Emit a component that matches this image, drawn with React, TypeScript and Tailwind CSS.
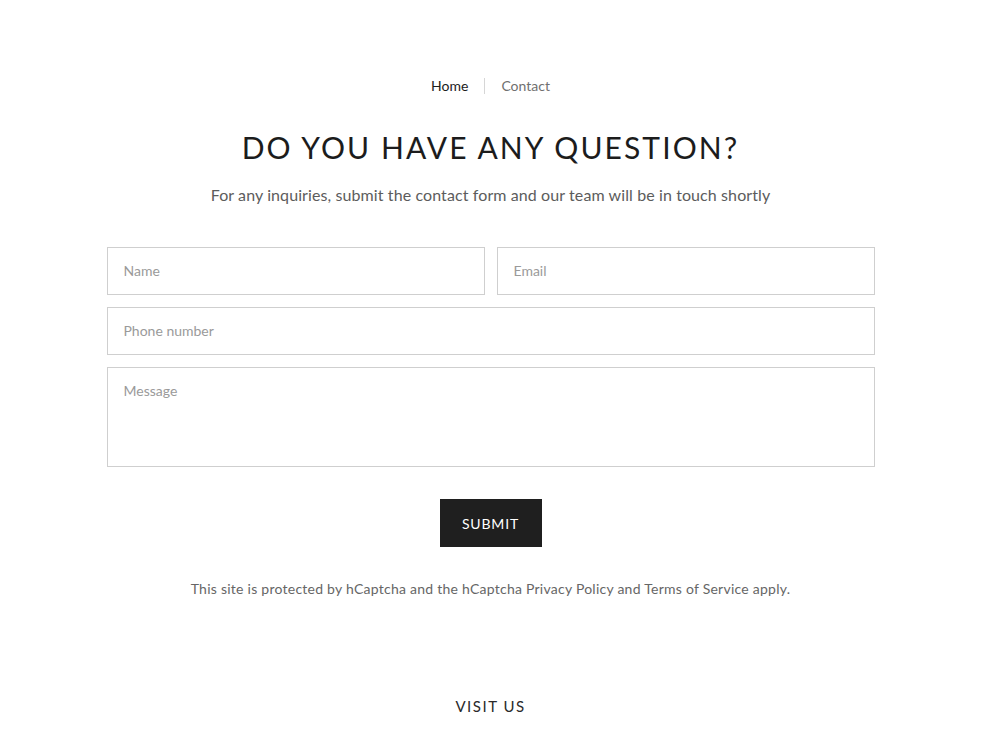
import React from 'react';

const App: React.FC = () => {
  return (
    <div className="min-h-screen bg-white text-[#1c1c1c] font-['Lato',sans-serif]">
      <main className="flex flex-col items-center pt-[76px]">
        {/* Breadcrumb */}
        <nav className="flex items-center text-[14px] leading-[20px]">
          <a className="text-[#1c1c1c]">Home</a>
          <span className="mx-4 h-[16px] w-px bg-[#d6d6d6]" />
          <a className="text-[#707070]">Contact</a>
        </nav>

        <h1 className="mt-[33px] text-[30px] leading-[36px] tracking-[0.07em] uppercase text-[#1c1c1c]">
          Do you have any question?
        </h1>
        <p className="mt-[18px] text-[16px] leading-[24px] tracking-[0.1px] text-[#5c5c5c]">
          For any inquiries, submit the contact form and our team will be in touch shortly
        </p>

        <form className="mt-[40px] w-[768px] flex flex-col gap-3">
          <div className="grid grid-cols-2 gap-3">
            <input
              placeholder="Name"
              className="h-[48px] border border-[#cfcfcf] px-4 pb-[2px] text-[14px] placeholder:text-[#9a9a9a] outline-none"
            />
            <input
              placeholder="Email"
              className="h-[48px] border border-[#cfcfcf] px-4 pb-[2px] text-[14px] placeholder:text-[#9a9a9a] outline-none"
            />
          </div>
          <input
            placeholder="Phone number"
            className="h-[48px] border border-[#cfcfcf] px-4 pb-[2px] text-[14px] placeholder:text-[#9a9a9a] outline-none"
          />
          <textarea
            placeholder="Message"
            className="h-[100px] resize-none border border-[#cfcfcf] px-4 pt-[12px] text-[14px] placeholder:text-[#9a9a9a] outline-none"
          />
          <div className="flex justify-center mt-[20px]">
            <button
              type="button"
              className="h-[48px] w-[102px] bg-[#1f1f1f] text-white text-[14px] tracking-[0.06em] uppercase"
            >
              Submit
            </button>
          </div>
        </form>

        <p className="mt-[32px] text-[14px] leading-[20px] tracking-[0.25px] text-[#666]">
          This site is protected by hCaptcha and the hCaptcha Privacy Policy and Terms of Service apply.
        </p>

        <h2 className="mt-[97px] text-[15px] leading-[20px] tracking-[0.1em] uppercase text-[#2a2a2a]">
          Visit us
        </h2>
      </main>
    </div>
  );
};

export default App;
